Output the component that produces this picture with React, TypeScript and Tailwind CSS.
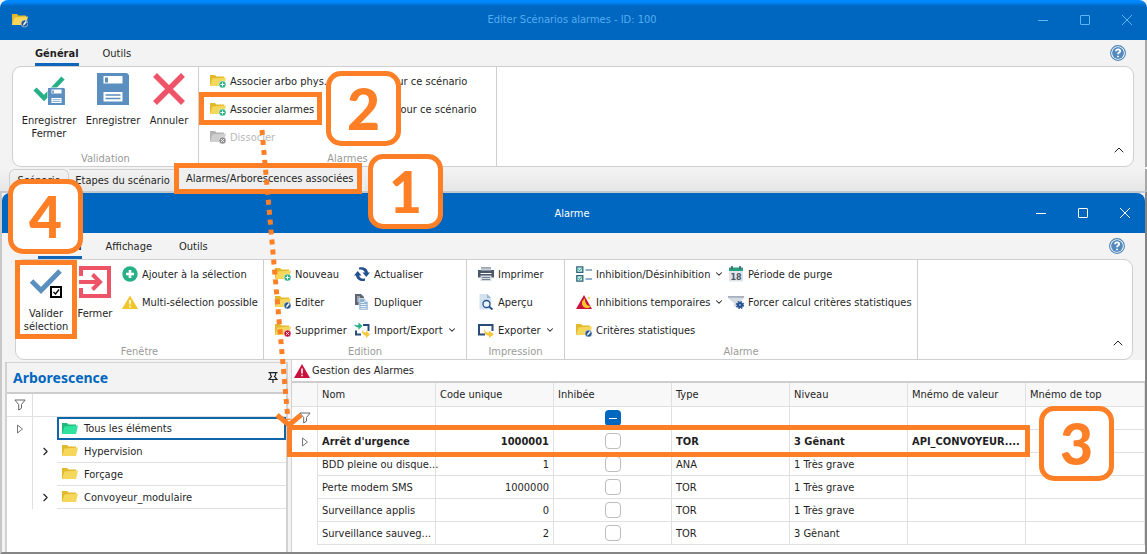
import React, { type ReactNode } from "react";
import { ChevronDown, ChevronRight, ChevronUp } from "lucide-react";

type Badge = "add" | "edit" | "remove" | "off";

function Folder({ badge, tone = "yellow" }: { badge?: Badge; tone?: "yellow" | "green" | "gray" }) {
  const [back, front] = {
    yellow: ["#e3b92c", "#f5d75c"],
    green: ["#1fb87f", "#2fe39f"],
    gray: ["#b4b4b4", "#cfcfcf"],
  }[tone];
  return (
    <svg width="16" height="16" viewBox="0 0 16 16" aria-hidden="true" className="shrink-0">
      <path d="M0 2h5l1.500 1.500H14V13H0z" fill={back} />
      <path d="M2.500 5.500 16 4.500 14 13H0z" fill={front} />
      {badge === "add" && (
        <>
          <circle cx="12.500" cy="11.500" r="3.500" fill="#27b088" stroke="#fff" strokeWidth=".5" />
          <path d="M12.500 9.500v4M10.500 11.500h4" stroke="#fff" />
        </>
      )}
      {badge === "remove" && (
        <>
          <circle cx="12.500" cy="11.500" r="3.500" fill="#c8143c" stroke="#fff" strokeWidth=".5" />
          <path d="m11.200 10.200 2.600 2.600m0-2.600-2.600 2.600" stroke="#fff" />
        </>
      )}
      {badge === "off" && (
        <>
          <circle cx="12.500" cy="11.500" r="3.500" fill="#8d8d8d" stroke="#fff" strokeWidth=".5" />
          <path d="m11.200 10.200 2.600 2.600m0-2.600-2.600 2.600" stroke="#fff" />
        </>
      )}
      {badge === "edit" && (
        <>
          <circle cx="12.500" cy="11.500" r="3.500" fill="#27588f" stroke="#fff" strokeWidth=".5" />
          <path d="m11 13.800.4-2 2.300-2.800 1.200 1-2.300 2.800z" fill="#fff" />
        </>
      )}
    </svg>
  );
}

function Svg16({ children }: { children: ReactNode }) {
  return (
    <svg width="16" height="16" viewBox="0 0 16 16" fill="none" aria-hidden="true" className="shrink-0">
      {children}
    </svg>
  );
}

const PlusCircle = () => (
  <Svg16>
    <circle cx="8" cy="8" r="7.700" fill="#27b088" />
    <path d="M8 4v8M4 8h8" stroke="#fff" strokeWidth="2.600" />
  </Svg16>
);
const WarningYellow = () => (
  <Svg16>
    <path d="M8 1.500 16 15H0z" fill="#f2c52b" />
    <path d="M8 6v4.500M8 11.700v1.800" stroke="#fff" strokeWidth="1.500" />
  </Svg16>
);
const WarningRed = () => (
  <Svg16>
    <path d="M8 1 16 15H0z" fill="#c8143c" />
    <path d="M8 5.500v5M8 11.700v1.600" stroke="#fff" strokeWidth="1.500" />
  </Svg16>
);
const Refresh = () => (
  <Svg16>
    <path d="M5 1.500C9 .3 13.500 2 14 6.500h2L12.300 11 8.500 6.500h2.300C10.500 4.500 8.500 3 5 3.500z" fill="#24508f" />
    <path d="M11 14.700C7 15.800 2.500 14 2 9.500H0L3.700 5l3.800 4.500H5.200c.3 2 2.300 3.600 5.800 3z" fill="#24508f" />
  </Svg16>
);
const Copy = () => (
  <Svg16>
    <path d="M1 0h6l3 3v8H1z" fill="#5c6573" />
    <path d="M3 3h3M3 5h5M3 7h5" stroke="#fff" strokeWidth=".8" />
    <path d="M5 4.500h5.500L14 8v8H5z" fill="#8eb1d4" stroke="#fff" strokeWidth=".6" />
    <path d="M6.500 8.500h4M6.500 10.500h6M6.500 12.500h6M6.500 14.300h6" stroke="#fff" strokeWidth=".8" />
    <path d="M10.500 4.500V8H14z" fill="#d3e2f0" />
  </Svg16>
);
const ImportExport = () => (
  <Svg16>
    <path d="M9 3h5.500v6M7 12.500H2V8.500" stroke="#2a4c78" strokeWidth="2" />
    <path d="M0 2.500c2 1 3 .8 4.500.5V.5L8.500 4 4.500 7.700V5.500C2.500 5.500 1 4.500 0 2.500z" fill="#27b088" />
    <path d="M8 8c1 2 2.500 2.500 4 2.500V8.500l4 4-4 3.500v-2.200C9.500 13.500 7.500 11 8 8z" fill="#f5c83d" />
  </Svg16>
);
const Printer = () => (
  <Svg16>
    <path d="M3 1h10v4H3z" fill="#9aa4b2" />
    <path d="M0 4h16v7.500H0z" fill="#4c5869" />
    <path d="M3 2.500h10v2H3z" fill="#c7cdd5" />
    <path d="M2.500 7.500h11" stroke="#fff" />
    <path d="M2.500 9.500h11V15h-11z" fill="#d3d9e1" />
    <path d="M4 11.500h8M4 13.500h8" stroke="#738091" />
  </Svg16>
);
const Preview = () => (
  <Svg16>
    <path d="M1.500 0H9l4 4v11.500H1.500z" fill="#d3e2ee" />
    <path d="M9 0v4h4z" fill="#93b7d5" />
    <circle cx="8.500" cy="10" r="3.500" fill="#edf5fb" stroke="#24508f" strokeWidth="1.300" />
    <path d="m11 12.500 3.500 3" stroke="#24508f" strokeWidth="1.800" />
  </Svg16>
);
const Export = () => (
  <Svg16>
    <path d="M7 12.500H1V3h13.500v6" stroke="#2a4c78" strokeWidth="2" />
    <path d="M6.500 7c.5 3 2.500 3.500 4.500 3.500V8.500l5 4-5 3.500v-2.200C7.500 13.500 5.500 11 6.500 7z" fill="#f5c83d" />
  </Svg16>
);
const CheckList = () => (
  <Svg16>
    <path d="M.8.800h6v5.500h-6zM.8 9.700h6v5.500h-6z" fill="#bff0e2" stroke="#35627e" strokeWidth="1.300" />
    <path d="m2.300 3.400 1.400 1.200L5.600 2.400M2.300 12.300l1.400 1.200 1.900-2.200" stroke="#27a07f" />
    <path d="M9.500 4H16M9.500 13H16" stroke="#6d96ba" strokeWidth="1.500" />
  </Svg16>
);
const AlarmMoon = () => (
  <Svg16>
    <path d="M8 1 16 15H0z" fill="#c8143c" />
    <path d="M9 4.500c-4 2-4.500 8 1 9.500 2.300.4 4-.5 5-2-3.700.4-6.200-2.500-6-7.500z" fill="#ffc629" />
    <path d="m13 2 .5 1.500L15 4l-1.500.5L13 6l-.5-1.500L11 4l1.500-.5z" fill="#ffc629" />
  </Svg16>
);
const Calendar = () => (
  <Svg16>
    <path d="M1 2h14v13.500H1z" fill="#dfe5ea" />
    <path d="M1 1.500h14V5H1z" fill="#27a07f" />
    <path d="M4 0v3M12 0v3" stroke="#4c5869" strokeWidth="1.600" />
    <text x="8" y="13.500" textAnchor="middle" fontSize="8" fontWeight="700" fontFamily="DejaVu Sans" fill="#4c5869">
      18
    </text>
  </Svg16>
);
const FunnelGear = () => (
  <Svg16>
    <path d="M0 2h16v2l-6 5v5l-4-2V9L0 4z" fill="#d5dbe2" />
    <path d="M0 2h16v1.700H0z" fill="#a3afbd" />
    <circle cx="12" cy="11" r="3" fill="#24508f" />
    <circle cx="12" cy="11" r="3.400" stroke="#24508f" strokeWidth="1.400" strokeDasharray="1.600 1.070" />
    <circle cx="12" cy="11" r="1" fill="#8fb2de" />
  </Svg16>
);
const Help = () => (
  <Svg16>
    <circle cx="8" cy="8" r="7.400" fill="#fff" stroke="#4a83b8" strokeWidth="1.100" />
    <circle cx="8" cy="8" r="5.900" fill="#5389bc" />
    <path d="M6 6.300c0-2.700 4.200-2.600 4.200-.2C10.200 7.600 8 7.600 8 9.300M8 10.700v1.500" stroke="#fff" strokeWidth="1.800" />
  </Svg16>
);
const Filter = () => (
  <svg width="12" height="12" viewBox="0 0 12 12" fill="none" stroke="#666" aria-hidden="true">
    <path d="M.9 1h10.200L7.500 5.500v3.700L4.700 11V5.500z" />
  </svg>
);
const RowMarker = () => (
  <svg width="8" height="10" viewBox="0 0 8 10" fill="none" stroke="#777" aria-hidden="true">
    <path d="m1.500 1 5 4-5 4z" />
  </svg>
);
const Pin = () => (
  <svg width="10" height="11" viewBox="0 0 10 11" fill="none" stroke="#222" strokeWidth="1.200" aria-hidden="true">
    <path d="M.5.700h9M2.500 1v2l1 1.500L1 7.500h8L6.500 4.500l1-1.500V1M5 7.500V11" />
  </svg>
);

const DisketteShape = () => (
  <>
    <path d="M0 0h30l2 2v30H0z" fill="#5b8fbf" />
    <path d="M6.500 3h19v7.500h-19zM6.500 19h19v9.500h-19z" fill="#fff" />
    <path d="M8 4.500h3v5H8z" fill="#5b8fbf" />
    <path d="M8.500 22h15M8.500 25.500h15" stroke="#5b8fbf" strokeWidth="1.300" />
  </>
);
const SaveClose = () => (
  <svg width="32" height="32" viewBox="0 0 32 32" fill="none" aria-hidden="true">
    <path d="m2 16 9 9L30 5" stroke="#27b088" strokeWidth="4.500" />
    <g transform="translate(15 15) scale(.53)">
      <path d="M-1-1h34v34H-1z" fill="#fff" />
      <DisketteShape />
    </g>
  </svg>
);
const Save = () => (
  <svg width="32" height="32" viewBox="0 0 32 32" aria-hidden="true">
    <DisketteShape />
  </svg>
);
const Cancel = () => (
  <svg width="32" height="32" viewBox="0 0 32 32" fill="none" aria-hidden="true">
    <path d="m2 2 28 28M30 2 2 30" stroke="#ee5468" strokeWidth="5.500" />
  </svg>
);
const Validate = () => (
  <svg width="32" height="32" viewBox="0 0 32 32" fill="none" aria-hidden="true">
    <path d="m1.500 15 9.500 9.500L30 5" stroke="#5b8fbf" strokeWidth="5" />
    <path d="M21 21h10v10H21z" fill="#fff" stroke="#000" strokeWidth="2" />
    <path d="m23.500 26 2 2 3.500-4.500" stroke="#000" strokeWidth="1.300" />
  </svg>
);
const Exit = () => (
  <svg width="32" height="32" viewBox="0 0 32 32" fill="none" stroke="#ee5468" aria-hidden="true">
    <path d="M2 10V2h28v28H2v-8" strokeWidth="4" />
    <path d="M0 16h21M13.500 8.500 21 16l-7.500 7.500" strokeWidth="4" />
  </svg>
);

function BigButton({ icon, className, children }: { icon: ReactNode; className: string; children: ReactNode }) {
  return (
    <button type="button" className={`flex flex-col items-center pt-1.5 leading-[13px] ${className}`}>
      {icon}
      <span className="mt-[9px] text-center">{children}</span>
    </button>
  );
}

function Item({ icon, label, menu, disabled }: { icon?: ReactNode; label: string; menu?: boolean; disabled?: boolean }) {
  return (
    <button
      type="button"
      disabled={disabled}
      className="flex h-7 items-center gap-1 text-left whitespace-nowrap disabled:text-[#b9b9b9]"
    >
      {icon}
      <span className="pt-0.5">{label}</span>
      {menu && <ChevronDown size={10} strokeWidth={2.5} className="shrink-0" />}
    </button>
  );
}

function Group({ title, className, children }: { title: string; className: string; children: ReactNode }) {
  return (
    <section className={`flex shrink-0 flex-col border-r border-[#cfcfcf] ${className}`}>
      <div className="flex h-[85px]">{children}</div>
      <h2 className="text-center leading-[14px] text-[#9a9a9a]">{title}</h2>
    </section>
  );
}

function Ribbon({ children }: { children: ReactNode }) {
  return (
    <div className="flex h-[101px] rounded-[9px] border border-[#cfcfcf] bg-white">
      {children}
      <button type="button" aria-label="Réduire le ruban" className="mt-auto mr-1.5 mb-2 ml-auto">
        <ChevronUp size={16} strokeWidth={1.5} />
      </button>
    </div>
  );
}

function WindowButtons({ className }: { className: string }) {
  return (
    <div className={`flex items-center gap-8 ${className}`}>
      <button type="button" aria-label="Réduire">
        <svg width="10" height="10" viewBox="0 0 10 10" fill="none" stroke="currentColor">
          <path d="M0 5.500h10" />
        </svg>
      </button>
      <button type="button" aria-label="Agrandir">
        <svg width="10" height="10" viewBox="0 0 10 10" fill="none" stroke="currentColor">
          <rect x=".5" y=".5" width="9" height="9" rx=".5" />
        </svg>
      </button>
      <button type="button" aria-label="Fermer la fenêtre">
        <svg width="10" height="10" viewBox="0 0 10 10" fill="none" stroke="currentColor">
          <path d="m0 0 10 10M10 0 0 10" />
        </svg>
      </button>
    </div>
  );
}

function Check({ label }: { label: string }) {
  return (
    <input
      type="checkbox"
      aria-label={label}
      className="block size-4 appearance-none rounded-[4px] border border-[#bdbdbd] bg-white"
    />
  );
}

function Callout({ n, className }: { n: number; className: string }) {
  return (
    <div
      className={`absolute flex size-[75px] items-center justify-center rounded-[15px] border-[5px] border-[#ff7f27] bg-white font-['Lato',sans-serif] text-[57px] leading-[65px] font-black text-[#ff7f27] ${className}`}
    >
      {n}
    </div>
  );
}

const columns = ["Nom", "Code unique", "Inhibée", "Type", "Niveau", "Mnémo de valeur", "Mnémo de top"];

const alarms = [
  { name: "Arrêt d'urgence", code: 1000001, type: "TOR", level: "3 Gênant", tag: "API_CONVOYEUR...." },
  { name: "BDD pleine ou disque...", code: 1, type: "ANA", level: "1 Très grave", tag: "" },
  { name: "Perte modem SMS", code: 1000000, type: "TOR", level: "1 Très grave", tag: "" },
  { name: "Surveillance applis", code: 0, type: "TOR", level: "1 Très grave", tag: "" },
  { name: "Surveillance sauveg...", code: 2, type: "TOR", level: "3 Gênant", tag: "" },
];

const tree = [
  { name: "Tous les éléments", selected: true, expandable: false },
  { name: "Hypervision", selected: false, expandable: true },
  { name: "Forçage", selected: false, expandable: false },
  { name: "Convoyeur_modulaire", selected: false, expandable: true },
];

const cell = "border-r border-b border-[#e0e0e0] px-1 whitespace-nowrap";
const textCell = "border-r border-b border-[#e0e0e0] px-1 pt-0.5 whitespace-nowrap";

function TreePanel() {
  return (
    <aside className="mt-0.5 w-[283px] shrink-0 border-x-2 border-t border-[#d2d2d2] bg-white">
      <header className="flex h-[31px] items-center justify-between border-b-2 border-[#cdcdcd] bg-[#f3f3f3] pr-2 pl-1.5">
        <h2 className="font-['Noto_Sans',sans-serif] text-[14px] font-bold text-[#0067c0]">Arborescence</h2>
        <button type="button" aria-label="Épingler">
          <Pin />
        </button>
      </header>
      <div className="flex h-[23px] border-b border-[#e0e0e0]">
        <div className="flex w-[26px] items-center justify-center border-r border-[#e0e0e0]">
          <Filter />
        </div>
      </div>
      <ul>
        {tree.map((node) => (
          <li key={node.name} className="flex h-[23px]">
            <span className="flex w-[26px] items-center justify-center border-r border-[#e0e0e0]">
              {node.selected && <RowMarker />}
            </span>
            <span className="flex w-6 items-center justify-center">
              {node.expandable && (
                <button type="button" aria-label={`Développer ${node.name}`}>
                  <ChevronRight size={13} strokeWidth={2} />
                </button>
              )}
            </span>
            <span
              className={
                node.selected
                  ? "flex flex-1 items-center gap-1.5 border-2 border-[#0f66a8] px-[3px]"
                  : "flex flex-1 items-center gap-1.5 border-b border-[#e0e0e0] px-[5px]"
              }
            >
              <Folder tone={node.selected ? "green" : "yellow"} />
              <span className={node.selected ? "" : "pt-0.5"}>{node.name}</span>
            </span>
          </li>
        ))}
      </ul>
    </aside>
  );
}

function AlarmPanel() {
  return (
    <main className="min-w-0 flex-1 border-l border-[#d2d2d2] bg-white">
      <h2 className="flex h-[23px] items-center gap-0.5 border-b-2 border-[#cdcdcd] pl-0.5">
        <WarningRed />
        <span className="pt-px">Gestion des Alarmes</span>
      </h2>
      <table className="w-full table-fixed border-separate border-spacing-0">
        <colgroup>
          <col className="w-[26px]" />
          <col className="w-[118px]" />
          <col className="w-[118px]" />
          <col className="w-[118px]" />
          <col className="w-[118px]" />
          <col className="w-[118px]" />
          <col className="w-[118px]" />
          <col />
        </colgroup>
        <thead>
          <tr className="h-6 bg-[#f8f8f9]">
            <td className={cell} />
            {columns.map((c) => (
              <th key={c} scope="col" className={`${cell} text-left font-normal`}>
                {c}
              </th>
            ))}
          </tr>
        </thead>
        <tbody>
          <tr className="h-[23px]">
            <td className={cell}>
              <div className="flex justify-center">
                <Filter />
              </div>
            </td>
            {columns.map((c) => (
              <td key={c} className={cell}>
                {c === "Inhibée" && (
                  <label className="relative mx-auto block size-4">
                    <input
                      type="checkbox"
                      aria-label="Filtrer sur Inhibée"
                      className="block size-4 appearance-none rounded-[4px] bg-[#0067c0]"
                    />
                    <span className="absolute inset-x-1 top-2 h-px bg-white" />
                  </label>
                )}
              </td>
            ))}
          </tr>
          {alarms.map((a, i) => (
            <tr key={a.name} className={i === 0 ? "h-[23px] font-bold" : "h-[23px]"}>
              <td className="border-r border-[#e0e0e0]">
                <div className="flex justify-center">{i === 0 && <RowMarker />}</div>
              </td>
              <td className={textCell}>{a.name}</td>
              <td className={`${textCell} text-right`}>{a.code}</td>
              <td className={cell}>
                <div className="flex justify-center">
                  <Check label={`Inhiber ${a.name}`} />
                </div>
              </td>
              <td className={textCell}>{a.type}</td>
              <td className={textCell}>{a.level}</td>
              <td className={textCell}>{a.tag}</td>
              <td className={textCell} />
            </tr>
          ))}
        </tbody>
      </table>
    </main>
  );
}

export default function App() {
  return (
    <div className="relative flex min-h-screen flex-col overflow-hidden bg-[#f3f3f3] font-['DejaVu_Sans_Condensed','DejaVu_Sans',sans-serif] text-[11px] leading-[14px] text-[#1f1f1f]">
      <header className="grid h-10 grid-cols-[1fr_auto_1fr] items-center rounded-t-lg bg-linear-to-b from-[#0088ff] from-5% to-[#0067c0] to-15% pr-[15px] pl-3">
        <Folder badge="edit" />
        <h1 className="text-[#55adf0]">Editer Scénarios alarmes - ID: 100</h1>
        <WindowButtons className="justify-self-end text-[#62b4f5]" />
      </header>

      <div className="border-r-2 border-[#a8a8a8] pr-[11px] pl-3">
        <nav className="flex h-[26px] items-stretch pr-2 pl-[23px]">
          <a href="#general" className="flex items-center border-b-[3px] border-[#0f66b8] pt-[5px] font-bold">
            Général
          </a>
          <a href="#outils" className="ml-6 flex items-center pt-0.5">
            Outils
          </a>
          <button type="button" aria-label="Aide" className="ml-auto">
            <Help />
          </button>
        </nav>
        <Ribbon>
          <Group title="Validation" className="w-[186px]">
            <BigButton icon={<SaveClose />} className="ml-1 w-16">
              Enregistrer
              <br />
              Fermer
            </BigButton>
            <BigButton icon={<Save />} className="w-16">
              Enregistrer
            </BigButton>
            <BigButton icon={<Cancel />} className="w-12">
              Annuler
            </BigButton>
          </Group>
          <Group title="Alarmes" className="w-[298px]">
            <div className="w-[186px] pl-[11px]">
              <Item icon={<Folder badge="add" />} label="Associer arbo phys." />
              <Item icon={<Folder badge="add" />} label="Associer alarmes" />
              <Item icon={<Folder badge="off" tone="gray" />} label="Dissocier" disabled />
            </div>
            <div>
              <Item label="pour ce scénario" />
              <Item label="é pour ce scénario" />
            </div>
          </Group>
        </Ribbon>
      </div>

      <nav className="mt-0.5 flex h-[22px] items-stretch border-r-2 border-[#a8a8a8] bg-linear-to-b from-[#f3f3f3] to-[#e6e6e6] pl-[9px] whitespace-nowrap">
        <a href="#scenario" className="flex w-[60px] items-center justify-center rounded-t-md border border-b-0 border-[#cfcfcf]">
          Scénario
        </a>
        <a href="#etapes" className="flex w-[107px] items-center justify-center border-t border-[#cfcfcf]">
          Etapes du scénario
        </a>
        <a href="#associees" className="flex items-center bg-[#efefef] px-2.5 pb-0.5">
          Alarmes/Arborescences associées
        </a>
      </nav>

      <div className="flex flex-1 flex-col border-t-2 border-r-2 border-b-2 border-l-2 border-t-[#c4c9cf] border-r-[#858585] border-b-[#858585] border-l-[#c8c8c8]">
        <header className="grid h-10 grid-cols-[1fr_auto_1fr] items-center rounded-t-lg bg-[#0067c0] pr-[15px] pl-3 text-white">
          <span />
          <h1 className="pt-0.5">Alarme</h1>
          <WindowButtons className="justify-self-end" />
        </header>
        <div className="pr-3 pl-[13px]">
          <nav className="flex h-[26px] items-stretch pr-2 pl-[23px]">
            <a href="#general2" className="flex items-center border-b-[3px] border-[#0f66b8] pt-[5px] font-bold">
              Général
            </a>
            <a href="#affichage" className="ml-6 flex items-center pt-0.5">
              Affichage
            </a>
            <a href="#outils2" className="ml-[27px] flex items-center pt-0.5">
              Outils
            </a>
            <button type="button" aria-label="Aide" className="ml-auto">
              <Help />
            </button>
          </nav>
          <Ribbon>
            <Group title="Fenêtre" className="w-[248px]">
              <BigButton icon={<Validate />} className="w-[60px]">
                Valider
                <br />
                sélection
              </BigButton>
              <BigButton icon={<Exit />} className="w-[38px]">
                Fermer
              </BigButton>
              <div className="ml-2">
                <Item icon={<PlusCircle />} label="Ajouter à la sélection" />
                <Item icon={<WarningYellow />} label="Multi-sélection possible" />
              </div>
            </Group>
            <Group title="Edition" className="w-[203px]">
              <div className="w-[90px] pl-[11px]">
                <Item icon={<Folder badge="add" />} label="Nouveau" />
                <Item icon={<Folder badge="edit" />} label="Editer" />
                <Item icon={<Folder badge="remove" />} label="Supprimer" />
              </div>
              <div>
                <Item icon={<Refresh />} label="Actualiser" />
                <Item icon={<Copy />} label="Dupliquer" />
                <Item icon={<ImportExport />} label="Import/Export" menu />
              </div>
            </Group>
            <Group title="Impression" className="w-[98px]">
              <div className="pl-[11px]">
                <Item icon={<Printer />} label="Imprimer" />
                <Item icon={<Preview />} label="Aperçu" />
                <Item icon={<Export />} label="Exporter" menu />
              </div>
            </Group>
            <Group title="Alarme" className="w-[353px]">
              <div className="w-[163px] pl-[11px]">
                <Item icon={<CheckList />} label="Inhibition/Désinhibition" menu />
                <Item icon={<AlarmMoon />} label="Inhibitions temporaires" menu />
                <Item icon={<Folder badge="edit" />} label="Critères statistiques" />
              </div>
              <div>
                <Item icon={<Calendar />} label="Période de purge" />
                <Item icon={<FunnelGear />} label="Forcer calcul critères statistiques" />
              </div>
            </Group>
          </Ribbon>
        </div>
        <div className="flex flex-1 gap-[3px] pl-[3px]">
          <TreePanel />
          <AlarmPanel />
        </div>
      </div>

      <div className="pointer-events-none">
        <div className="absolute top-[92px] left-[199px] h-[33px] w-[123px] border-[5px] border-[#ff7f27]" />
        <div className="absolute top-[163px] left-[174px] h-[31px] w-[188px] border-[5px] border-[#ff7f27]" />
        <div className="absolute top-[260px] left-[15px] h-[79px] w-[62px] border-[5px] border-[#ff7f27]" />
        <div className="absolute top-[425px] left-[287px] h-[32px] w-[743px] border-[5px] border-[#ff7f27]" />
        <svg className="absolute top-[120px] left-[250px]" width="60" height="320" viewBox="250 120 60 320" fill="none" stroke="#ff7f27" strokeWidth="5" aria-hidden="true">
          <path d="m262 130 26 290" strokeDasharray="5 5" />
          <path d="m277 415 12 10 12-10" />
        </svg>
        <Callout n={2} className="top-[71px] left-[326px]" />
        <Callout n={1} className="top-[154px] left-[368px]" />
        <Callout n={4} className="top-[179px] left-[8px]" />
        <Callout n={3} className="top-[406px] left-[1039px]" />
      </div>
    </div>
  );
}
